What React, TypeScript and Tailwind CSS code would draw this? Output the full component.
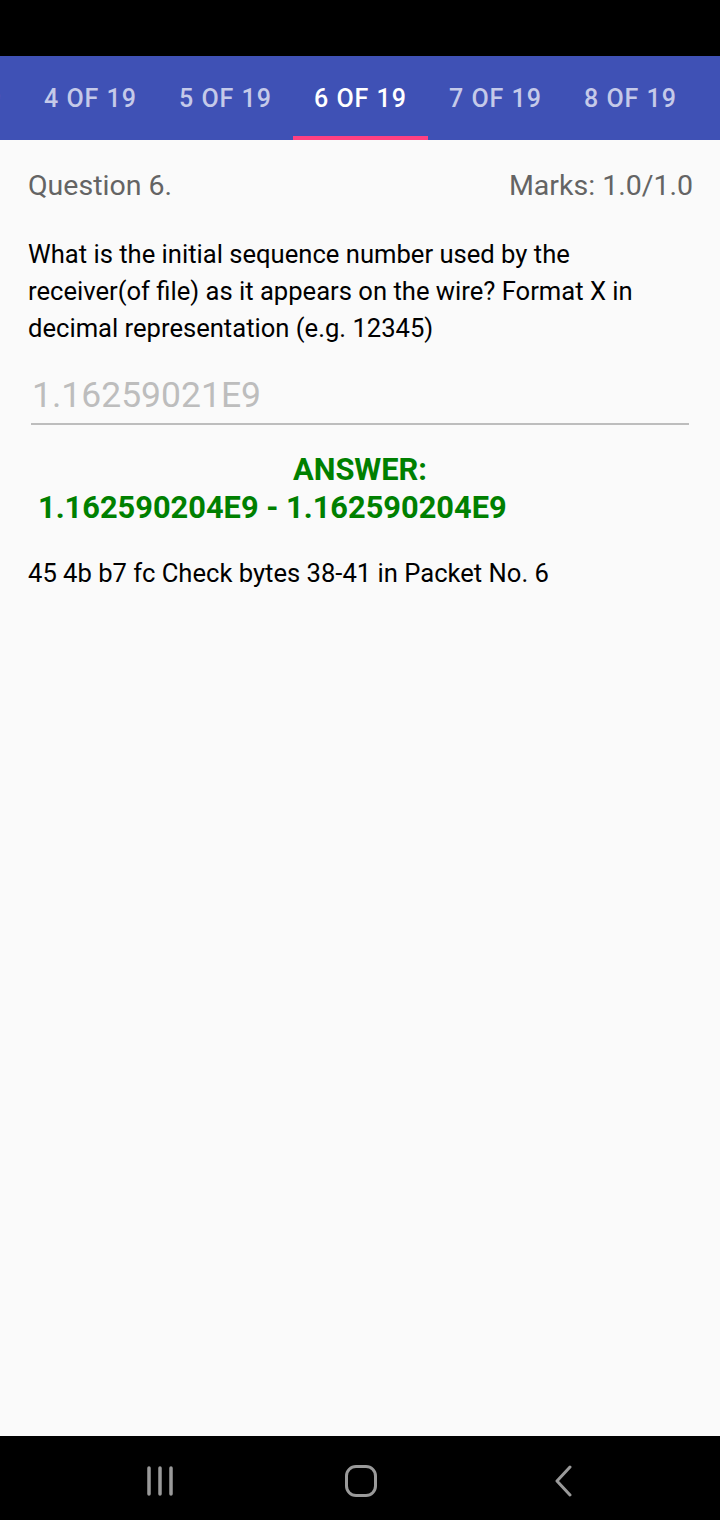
import React from 'react';

const tabs = ['3 OF 19', '4 OF 19', '5 OF 19', '6 OF 19', '7 OF 19', '8 OF 19'];

function NavBar() {
  return (
    <div className="h-[84px] bg-black shrink-0 flex items-center pl-[145px] pt-[6px]">
      {/* recents */}
      <svg width="30" height="32" viewBox="0 0 30 32">
        <path d="M4 3v26M15 3v26M26 3v26" stroke="#9a9a9a" strokeWidth="3.5" strokeLinecap="round" fill="none" />
      </svg>
      {/* home */}
      <svg width="32" height="32" viewBox="0 0 32 32" className="ml-[170px]">
        <rect x="1.5" y="1.5" width="29" height="29" rx="9.5" stroke="#9a9a9a" strokeWidth="3" fill="none" />
      </svg>
      {/* back */}
      <svg width="22" height="32" viewBox="0 0 22 32" className="ml-[175px]">
        <path d="M18 2L5 16l13 14" stroke="#9a9a9a" strokeWidth="3" strokeLinecap="round" strokeLinejoin="round" fill="none" />
      </svg>
    </div>
  );
}

export default function App() {
  return (
    <div className="w-[720px] h-[1520px] flex flex-col bg-[#fafafa] font-['Roboto',sans-serif] overflow-hidden">
      {/* status bar */}
      <div className="h-[56px] bg-black shrink-0" />

      {/* tab strip */}
      <div className="h-[84px] bg-[#3f51b5] shrink-0 overflow-hidden">
        <div className="flex ml-[-112px] h-full">
          {tabs.map((t) => {
            const active = t === '6 OF 19';
            return (
              <div key={t} className="w-[135px] shrink-0 relative flex items-center justify-center pt-[2px]">
                <span
                  className={`text-[25px] font-medium tracking-[0.04em] ${
                    active ? 'text-white' : 'text-[#c5cae9]'
                  }`}
                >
                  {t}
                </span>
                {active && <div className="absolute left-0 right-0 bottom-0 h-[4px] bg-[#ff4081]" />}
              </div>
            );
          })}
        </div>
      </div>

      {/* content */}
      <div className="flex-1 px-[28px] pt-[30px]">
        <div className="flex justify-between items-center text-[28.5px] leading-[32px] text-[#646464]">
          <span>Question 6.</span>
          <span className="mr-[-1px]">Marks: 1.0/1.0</span>
        </div>

        <p className="mt-[34px] w-[620px] text-[25.6px] leading-[37px] text-black">
          What is the initial sequence number used by the receiver(of file) as it appears on the wire? Format X in
          decimal representation (e.g. 12345)
        </p>

        <div className="mt-[26px] mx-[3px] border-b-2 border-[#bdbdbd] pb-[6px]">
          <div className="text-[35.5px] leading-[44px] text-[#bdbdbd] pl-[1px]">1.16259021E9</div>
        </div>

        <div className="mt-[26px] text-[30.8px] leading-[38px] font-bold text-[#008000]">
          <div className="text-center">ANSWER:</div>
          <div className="pl-[10px]">1.162590204E9 - 1.162590204E9</div>
        </div>

        <p className="mt-[30px] text-[25.6px] leading-[32px] text-black">45 4b b7 fc Check bytes 38-41 in Packet No. 6</p>
      </div>

      <NavBar />
    </div>
  );
}
